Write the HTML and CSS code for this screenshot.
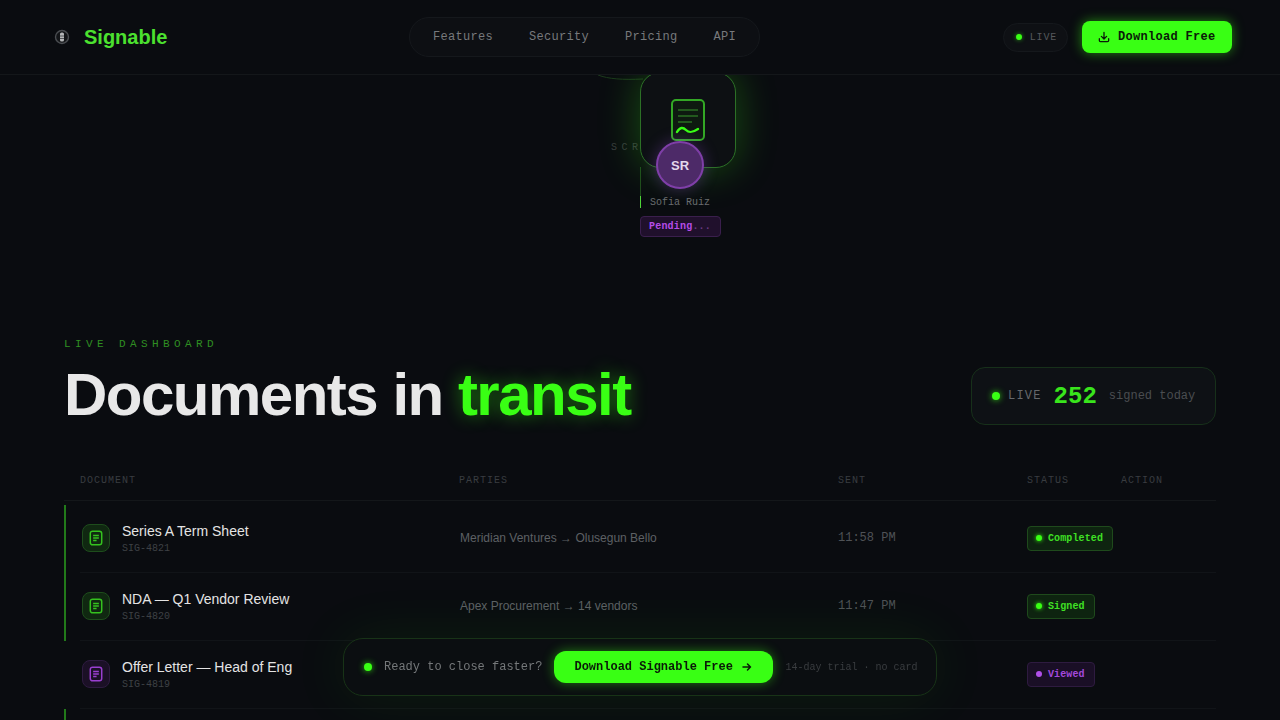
FILE: index.html
```html
<!DOCTYPE html>
<html lang="en">
<head>
<meta charset="utf-8">
<title>Signable</title>
<link rel="stylesheet" href="styles.css">
</head>
<body>
<header class="topbar">
  <a class="brand">
    <svg class="brand-icon" viewBox="0 0 16 16" width="16" height="16"><circle cx="8" cy="8" r="6.5" fill="#131518" stroke="#4a4d51" stroke-width="1.4"/><rect x="6" y="3.5" width="4" height="9" rx="1.6" fill="#b5b7b9"/><path d="M6 7h4M6 9.5h4" stroke="#3c3f43" stroke-width=".8"/></svg>
    <span class="brand-name">Signable</span>
  </a>
  <nav class="nav">
    <a class="nav-link">Features</a>
    <a class="nav-link">Security</a>
    <a class="nav-link">Pricing</a>
    <a class="nav-link">API</a>
  </nav>
  <div class="top-actions">
    <span class="live-pill"><i class="dot dot-green"></i>LIVE</span>
    <a class="btn-download">
      <svg viewBox="0 0 24 24" width="14" height="14" fill="none" stroke="currentColor" stroke-width="2.2" stroke-linecap="round" stroke-linejoin="round"><path d="M12 4v11M7.5 11l4.5 4.5 4.5-4.5M4 15v3a2 2 0 0 0 2 2h12a2 2 0 0 0 2-2v-3"/></svg>
      Download Free
    </a>
  </div>
</header>

<section class="canvas">
  <svg class="curve" width="60" height="10" viewBox="0 0 60 10" fill="none"><path d="M0 0C10 4 25 5 45 4" stroke="#1c3a1c" stroke-width="1"/></svg>
  <span class="scr-label">SCR</span>
  <span class="wire"></span>
  <span class="wire-tip"></span>
  <div class="doc-card">
    <svg class="doc-glyph" width="34" height="44" viewBox="0 0 34 44" fill="none"><rect x="1" y="1" width="32" height="40" rx="4" fill="#0e1a10" stroke="#33a825" stroke-width="2"/><path d="M7 11h20M7 17h20M7 23h14" stroke="#2a6f22" stroke-width="1.6"/><path d="M6 33c3-5 6-5 9-2s6 3 12-1" stroke="#39ff14" stroke-width="2.4" stroke-linecap="round"/></svg>
  </div>
  <div class="avatar">SR</div>
  <span class="signer-name">Sofia Ruiz</span>
  <span class="pending">Pending<b>...</b></span>
</section>

<main class="dashboard">
  <div class="dash-head">
    <div>
      <p class="eyebrow">LIVE DASHBOARD</p>
      <h1 class="title">Documents in <em>transit</em></h1>
    </div>
    <div class="stat">
      <i class="dot dot-stat"></i>
      <span class="stat-live">LIVE</span>
      <strong class="stat-num">252</strong>
      <span class="stat-note">signed today</span>
    </div>
  </div>

  <div class="table">
    <div class="thead">
      <span>DOCUMENT</span><span>PARTIES</span><span>SENT</span><span>STATUS</span><span>ACTION</span>
    </div>
    <div class="row row-live">
      <div class="doc">
        <span class="doc-icon">
          <svg viewBox="0 0 14 14" width="16" height="16" fill="none" stroke="currentColor" stroke-width="1.3"><rect x="2" y="1" width="10" height="12" rx="2"/><path d="M4.5 4.8h5M4.5 7h5M4.5 9.2h3"/></svg>
        </span>
        <div class="doc-text"><span class="doc-title">Series A Term Sheet</span><span class="doc-id">SIG-4821</span></div>
      </div>
      <span class="parties">Meridian Ventures → Olusegun Bello</span>
      <span class="sent">11:58 PM</span>
      <span class="badge"><i class="badge-dot"></i>Completed</span>
    </div>
    <div class="row row-live">
      <div class="doc">
        <span class="doc-icon">
          <svg viewBox="0 0 14 14" width="16" height="16" fill="none" stroke="currentColor" stroke-width="1.3"><rect x="2" y="1" width="10" height="12" rx="2"/><path d="M4.5 4.8h5M4.5 7h5M4.5 9.2h3"/></svg>
        </span>
        <div class="doc-text"><span class="doc-title">NDA — Q1 Vendor Review</span><span class="doc-id">SIG-4820</span></div>
      </div>
      <span class="parties">Apex Procurement → 14 vendors</span>
      <span class="sent">11:47 PM</span>
      <span class="badge"><i class="badge-dot"></i>Signed</span>
    </div>
    <div class="row">
      <div class="doc">
        <span class="doc-icon doc-icon-purple">
          <svg viewBox="0 0 14 14" width="16" height="16" fill="none" stroke="currentColor" stroke-width="1.3"><rect x="2" y="1" width="10" height="12" rx="2"/><path d="M4.5 4.8h5M4.5 7h5M4.5 9.2h3"/></svg>
        </span>
        <div class="doc-text"><span class="doc-title">Offer Letter — Head of Eng</span><span class="doc-id">SIG-4819</span></div>
      </div>
      <span class="parties"></span>
      <span class="sent"></span>
      <span class="badge badge-purple"><i class="badge-dot"></i>Viewed</span>
    </div>
    <div class="row row-live"></div>
  </div>
</main>

<aside class="cta">
  <i class="dot dot-stat"></i>
  <span class="cta-text">Ready to close faster?</span>
  <a class="cta-btn">Download Signable Free
    <svg viewBox="0 0 24 24" width="12" height="12" fill="none" stroke="currentColor" stroke-width="3" stroke-linecap="round" stroke-linejoin="round"><path d="M4 12h15M13 6l6 6-6 6"/></svg>
  </a>
  <span class="cta-note">14-day trial · no card</span>
</aside>
</body>
</html>
```
FILE: styles.css
```css
* { box-sizing: border-box; margin: 0; padding: 0; }
html, body { height: 720px; overflow: hidden; }
body { background: #0a0c10; color: #e8e8e8; font-family: "Liberation Sans", Arial, sans-serif; }
a { text-decoration: none; color: inherit; }
i { display: block; font-style: normal; }

.topbar {
  position: relative; z-index: 5; height: 75px; padding: 0 48px 0 54px;
  display: flex; align-items: center;
  background: #0a0c10; border-bottom: 1px solid #14171a;
}
.brand { display: flex; align-items: center; gap: 14px; width: 355px; }
.brand-icon { display: block; filter: blur(.4px); }
.brand-name { font-size: 20px; font-weight: 700; color: #4ce12f; letter-spacing: 0; }
.nav {
  display: flex; gap: 0; height: 40px; align-items: center; padding: 0 5px;
  background: #0d0f13; border: 1px solid #15181c; border-radius: 20px;
}
.nav-link {
  padding: 0 18px; font: 12px "Liberation Mono", monospace; letter-spacing: .3px; color: #77797c;
}
.top-actions { margin-left: auto; display: flex; align-items: center; gap: 14px; }
.live-pill {
  display: flex; align-items: center; gap: 8px; height: 29px; padding: 0 10px 0 12px; border-radius: 15px;
  background: #0e1014; border: 1px solid #15181c;
  font: 10px "Liberation Mono", monospace; letter-spacing: .8px; color: #55585c;
}
.dot { border-radius: 50%; }
.dot-green { width: 6px; height: 6px; background: #39ff14; box-shadow: 0 0 4px rgba(57,255,20,.6); }
.btn-download {
  display: flex; align-items: center; gap: 7px; width: 150px; height: 32px; padding-left: 15px; border-radius: 8px;
  background: #39ff14; color: #0a1a08; font: 700 12px "Liberation Mono", monospace; letter-spacing: .3px;
  box-shadow: 0 0 12px rgba(57,255,20,.5);
}

.canvas { position: relative; height: 219px; }
.curve { position: absolute; left: 598px; top: 0; }
.scr-label {
  position: absolute; left: 611px; top: 67px; font: 10px "Liberation Mono", monospace; letter-spacing: 4.5px; color: #383b3f;
}
.wire { position: absolute; left: 640px; top: 92px; width: 1px; height: 41px; background: #1f4a1d; }
.wire-tip { position: absolute; left: 640px; top: 121px; width: 1px; height: 12px; background: #4fd63a; }
.doc-card {
  position: absolute; left: 640px; top: -3px; width: 96px; height: 96px; border-radius: 20px;
  display: flex; align-items: center; justify-content: center;
  background: #0d1013; border: 1px solid #2c7026;
  box-shadow: 0 0 40px rgba(57,255,20,.28);
}
.doc-glyph { margin-top: 2px; }
.avatar {
  position: absolute; left: 656px; top: 66px; width: 48px; height: 48px; border-radius: 50%;
  display: flex; align-items: center; justify-content: center;
  background: #4d2a68; border: 2px solid #7f3fa8; color: #e4d8ec; font-size: 13px; font-weight: 700;
  box-shadow: 0 0 16px rgba(168,85,247,.3);
}
.signer-name {
  position: absolute; left: 650px; top: 122px; font: 10px "Liberation Mono", monospace; color: #6a6d70;
}
.pending {
  position: absolute; left: 640px; top: 141px; width: 81px; height: 21px; padding-left: 8px;
  border-radius: 4px; background: #20102c; border: 1px solid #3a1f4d;
  font: 700 10px/19px "Liberation Mono", monospace; letter-spacing: .2px; color: #b64ce8;
}
.pending b { color: #6a3a85; }

.dashboard { padding: 44px 64px 0; }
.dash-head { display: flex; justify-content: space-between; align-items: flex-end; }
.eyebrow { font: 11px/13px "Liberation Mono", monospace; letter-spacing: 4.4px; color: #2f8f22; }
.title {
  margin-top: 11px; font-size: 60px; line-height: 66px; font-weight: 700; letter-spacing: -1.5px; color: #e8e8e8;
}
.title em { font-style: normal; color: #39ff14; text-shadow: 0 0 18px rgba(57,255,20,.45); }
.stat {
  display: flex; align-items: center; width: 245px; height: 58px; margin-bottom: 3px; padding-left: 20px;
  background: #0e1115; border: 1px solid #17301a; border-radius: 14px;
}
.dot-stat { flex: none; width: 8px; height: 8px; background: #39ff14; box-shadow: 0 0 6px rgba(57,255,20,.8); }
.stat-live { margin-left: 8px; font: 12px "Liberation Mono", monospace; letter-spacing: 1.2px; color: #66696c; }
.stat-num { margin-left: 12px; font: 700 24px "Liberation Mono", monospace; color: #39e51c; }
.stat-note { margin-left: 12px; font: 12px "Liberation Mono", monospace; color: #4a4d50; }

.table { margin-top: 34px; }
.thead {
  display: grid; grid-template-columns: 379px 379px 189px 94px 111px; height: 39px; align-items: center;
  padding-bottom: 1px; border-bottom: 1px solid #14171a;
  font: 10px "Liberation Mono", monospace; letter-spacing: 1px; color: #393c40;
}
.thead span { padding-left: 16px; }
.row {
  position: relative; display: grid; grid-template-columns: 378px 378px 189px 94px; height: 68px; padding-bottom: 2px; align-items: center;
  border-left: 2px solid transparent;
}
.thead + .row { margin-top: 4px; }
.row::after { content: ""; position: absolute; left: 14px; right: 0; bottom: 0; height: 1px; background: #111418; }
.row-live { border-left-color: #227a1a; }
.doc { display: flex; align-items: center; gap: 12px; padding-left: 16px; }
.doc-icon {
  display: flex; align-items: center; justify-content: center; width: 28px; height: 28px; border-radius: 8px;
  background: #102811; border: 1px solid #1e4d1c; color: #35c21f;
}
.doc-icon-purple { background: #1b1026; border-color: #2e1b40; color: #9a3fd0; }
.doc-text { display: flex; flex-direction: column; gap: 3px; margin-top: 1px; }
.doc-title { font-size: 14px; line-height: 18px; color: #e4e4e4; }
.doc-id { font: 10px/12px "Liberation Mono", monospace; color: #3e4145; }
.parties { padding-left: 16px; font-size: 12px; color: #5d6064; }
.sent { padding-left: 16px; font: 12px "Liberation Mono", monospace; color: #4f5256; }
.badge {
  margin-left: 16px; justify-self: start; display: flex; align-items: center; gap: 6px; height: 25px; padding: 0 9px 0 8px;
  border-radius: 4px; background: #0e2410; border: 1px solid #1f4a1c;
  font: 700 10px "Liberation Mono", monospace; letter-spacing: .12px; color: #3fe024; white-space: nowrap;
}
.badge-dot { width: 6px; height: 6px; border-radius: 50%; background: #39ff14; box-shadow: 0 0 4px #39ff14; }
.badge-purple { background: #1a0f26; border-color: #2e1b40; color: #a448dc; }
.badge-purple .badge-dot { background: #b050e8; box-shadow: none; }

.cta {
  position: fixed; z-index: 6; left: 343px; top: 638px; width: 594px; height: 58px;
  display: flex; align-items: center; padding-left: 20px;
  background: #0b0e11; border: 1px solid #183317; border-radius: 20px;
  box-shadow: 0 0 60px rgba(57,255,20,.08);
}
.cta-text { margin-left: 12px; font: 12px "Liberation Mono", monospace; color: #75787a; }
.cta-btn {
  margin-left: 12px; display: flex; align-items: center; gap: 8px; width: 219px; height: 32px; padding-left: 20px; border-radius: 12px;
  background: #39ff14; color: #0a1a08; font: 700 12px "Liberation Mono", monospace;
  box-shadow: 0 0 12px rgba(57,255,20,.45);
}
.cta-note { margin-left: 12px; font: 10px "Liberation Mono", monospace; color: #3a3d40; }
```
